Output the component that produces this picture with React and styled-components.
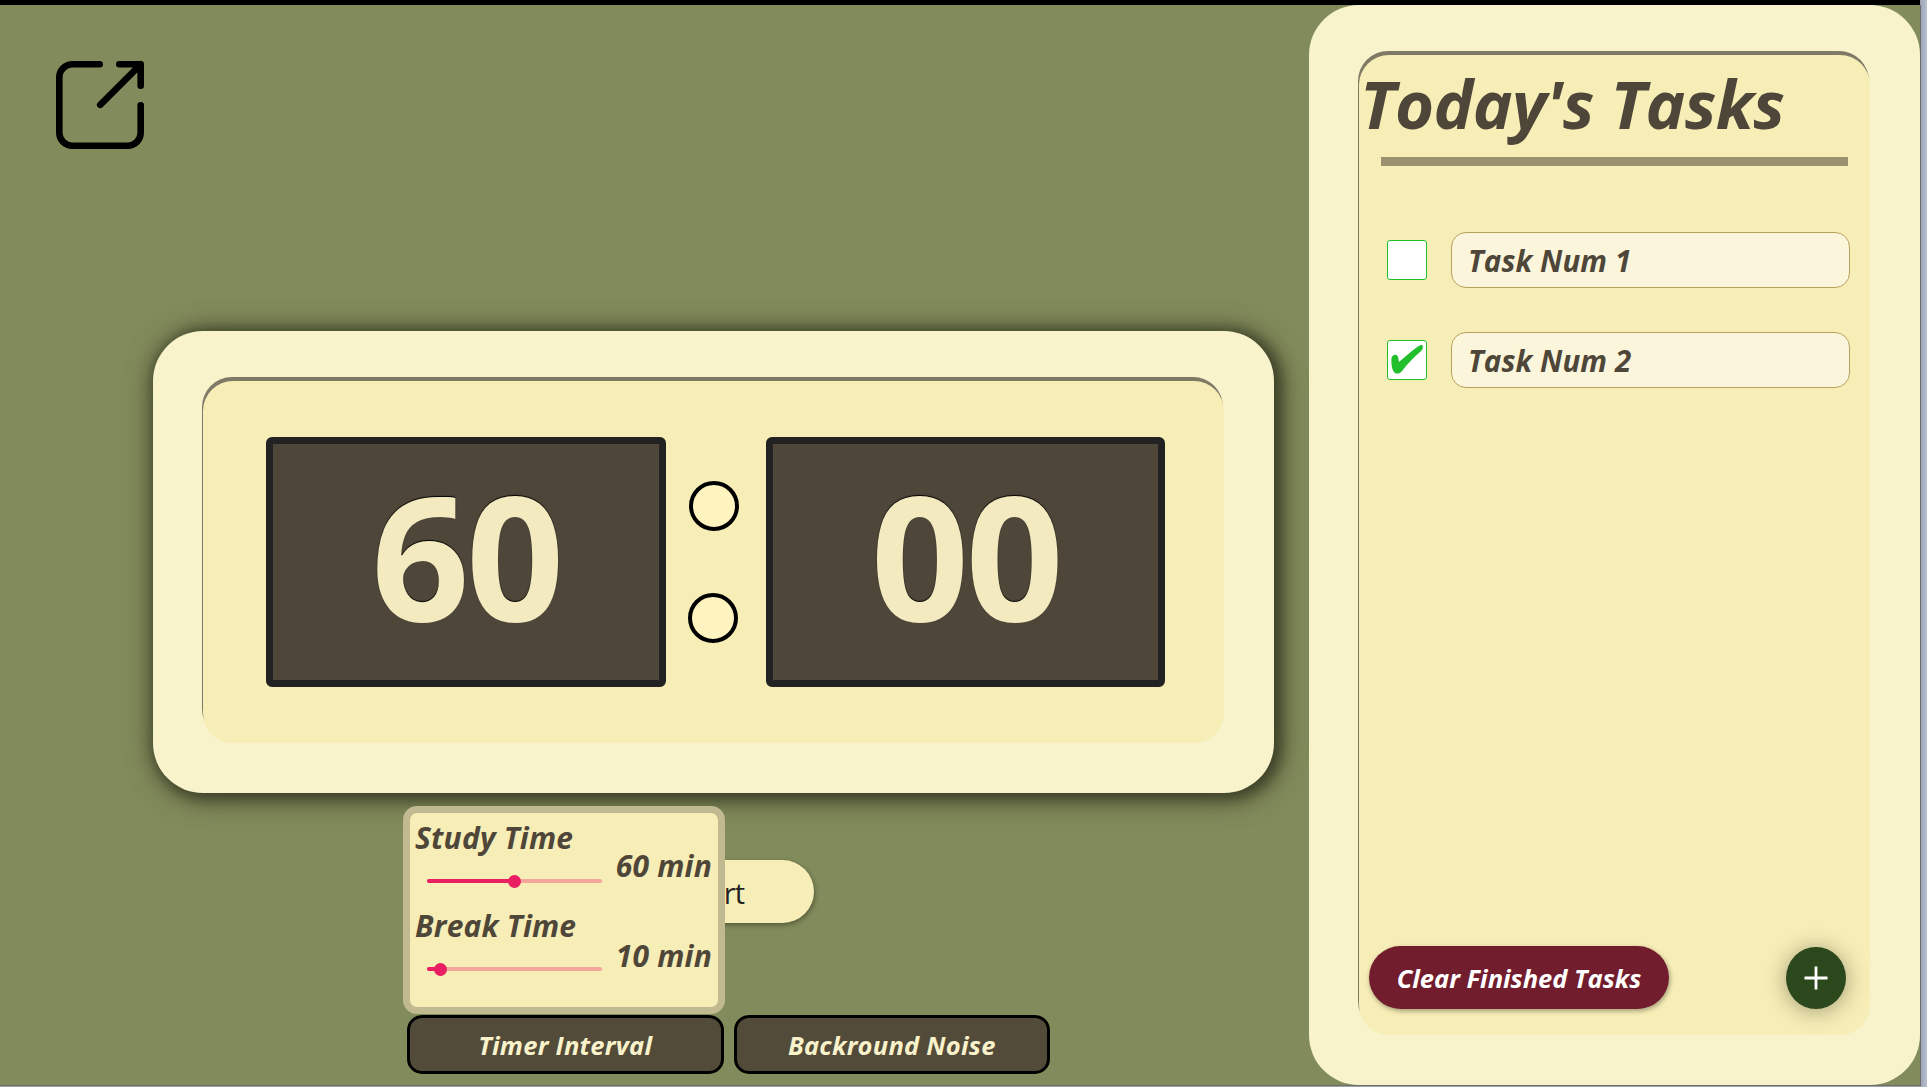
import React from "react";
import styled, { createGlobalStyle } from "styled-components";

const Global = createGlobalStyle`
  * { box-sizing: border-box; }
  html, body { margin: 0; background: #b0b8c9; overflow: hidden; }
  h1, p { margin: 0; }
  button, input { font: inherit; }
`;

const sans = `"Open Sans", "Noto Sans", sans-serif`;

const Frame = styled.div`
  width: 1927px;
  height: 1087px;
  display: flex;
  flex-direction: column;
  font-family: ${sans};
  background: linear-gradient(to right, #9ba1b3 1920px, #b8c0d0 1927px);
`;
const TopBar = styled.div`
  width: 1920px;
  height: 5px;
  background: #000;
`;
const Page = styled.div`
  width: 1921px;
  height: 1081px;
  display: flex;
  background: #828b5b;
  border-right: 1px solid #6c6e6c;
  border-bottom: 1px solid #6c7068;
`;
const Main = styled.main`
  width: 1309px;
  display: flex;
  flex-direction: column;
`;
const Header = styled.header`
  height: 326px;
  padding: 53px 53px 0;
`;
const Clock = styled.section`
  width: 1121px;
  height: 462px;
  margin-left: 153px;
  padding: 50px 50px 50px;
  flex: none;
  border-radius: 50px;
  background: #f9f3cb;
  box-shadow: 3px 3px 30px 0 #3f4329, 4px 2px 14px 3px #3f4329;
`;
const Face = styled.div`
  height: 362px;
  display: flex;
  align-items: flex-start;
  padding: 56px 59px 0 63px;
  border-radius: 30px;
  background: #f7edb6;
  box-shadow: -1px -4px 0 #7f7a66;
`;
const Digits = styled.div`
  width: ${(p) => p.$w}px;
  height: 250px;
  padding-bottom: 15px;
  display: flex;
  align-items: center;
  justify-content: center;
  border: 7px solid #222;
  border-radius: 6px;
  background: #4e4638;
  color: #f3eac0;
  font-size: 172px;
  font-weight: 670;
  line-height: 221px;
  letter-spacing: -3.6px;
  text-shadow: 0 -1px 1px #000;
`;
const Colon = styled.div`
  width: 100px;
  padding: 44px 0 0 23px;
  display: flex;
  flex-direction: column;
  gap: 62px;
`;
const Dot = styled.span`
  width: 50px;
  height: 50px;
  margin-left: ${(p) => p.$shift || 0}px;
  border: 4px solid #000;
  border-radius: 50%;
  background: #fff3bf;
`;
const Controls = styled.div`
  position: relative;
  flex: 1;
  padding: 67px 0 0 614px;
`;
const Start = styled.button`
  display: block;
  width: 200px;
  height: 63px;
  border: 0;
  padding: 1px 0 0;
  border-radius: 32px;
  background: #f7edb6;
  color: #222;
  font-size: 29px;
  letter-spacing: -0.7px;
  box-shadow: 1px 2px 5px rgba(0, 0, 0, 0.35);
`;
const Popover = styled.div`
  position: absolute;
  left: 403px;
  top: 13px;
  width: 322px;
  height: 208px;
  padding: 9px 0 0 5px;
  border: 7px solid #c1b990;
  border-radius: 14px;
  background: #f7edb6;
  color: #4e4638;
  font-weight: 700;
  font-style: italic;
`;
const Setting = styled.div`
  height: 88px;
  display: flex;
  justify-content: space-between;
  padding-right: 6px;
`;
const Label = styled.p`
  font-size: 30px;
  line-height: 32px;
  letter-spacing: 0.2px;
  white-space: nowrap;
`;
const Value = styled(Label)`
  padding-top: ${(p) => p.$top}px;
`;
const Track = styled.div`
  width: 175px;
  height: 4px;
  margin: 25px 0 0 12px;
  border-radius: 2px;
  display: flex;
  align-items: center;
  background: #f4a69b;
`;
const Fill = styled.div`
  height: 4px;
  border-radius: 2px;
  background: #e91e63;
`;
const Thumb = styled.div`
  width: 13px;
  height: 13px;
  margin-left: -6.5px;
  flex: none;
  border-radius: 50%;
  background: #e91e63;
`;
const Menu = styled.nav`
  display: flex;
  gap: 10px;
  margin: 92px 0 0 -207px;
`;
const MenuButton = styled.button`
  width: 316.5px;
  height: 59px;
  padding: 0;
  border: 3px solid #000;
  border-radius: 15px;
  background: #534b39;
  color: #f9f2cb;
  font-size: 25.5px;
  font-weight: 700;
  font-style: italic;
  letter-spacing: 0.25px;
`;
const Panel = styled.aside`
  width: 611px;
  height: 1080px;
  padding: 50px;
  border-radius: 50px;
  background: #f9f3cb;
`;
const Sheet = styled.div`
  height: 980px;
  display: flex;
  flex-direction: column;
  border-radius: 30px;
  background: #f7edb6;
  box-shadow: -1px -4px 0 #7f7a66;
  color: #4e4638;
  font-weight: 700;
  font-style: italic;
`;
const Title = styled.h1`
  height: 102px;
  padding-left: 1px;
  font-size: 67px;
  line-height: 96px;
  letter-spacing: -0.6px;
  white-space: nowrap;
`;
const Rule = styled.div`
  flex: none;
  width: 467px;
  height: 9px;
  margin-left: 22px;
  background: #9a926e;
`;
const Tasks = styled.div`
  flex: 1;
  display: flex;
  flex-direction: column;
  gap: 44px;
  padding: 66px 20px 0 28px;
`;
const Task = styled.div`
  display: flex;
  align-items: center;
  gap: 24px;
`;
const Check = styled.span`
  width: 40px;
  height: 40px;
  flex: none;
  display: flex;
  align-items: center;
  justify-content: center;
  border: 1px solid #1fbf2b;
  border-radius: 3px;
  background: #fff;
`;
const TaskName = styled.div`
  width: 399px;
  height: 56px;
  padding-left: 16px;
  border: 1px solid #b9a15c;
  border-radius: 15px;
  background: #fbf5db;
  font-size: 29.5px;
  line-height: 55px;
  letter-spacing: 0.1px;
`;
const Footer = styled.footer`
  height: 89px;
  display: flex;
  justify-content: space-between;
  padding: 0 24px 0 10px;
`;
const Clear = styled.button`
  width: 300px;
  height: 63px;
  padding: 0;
  border: 0;
  border-radius: 32px;
  background: #711d2e;
  color: #fff;
  font-size: 25.5px;
  white-space: nowrap;
  box-shadow: 1px 2px 5px rgba(0, 0, 0, 0.35);
`;
const Add = styled.button`
  width: 60px;
  height: 62px;
  margin-top: 1px;
  padding: 0;
  border: 0;
  border-radius: 50%;
  display: flex;
  align-items: center;
  justify-content: center;
  background: #2c481d;
  box-shadow: 0 2px 22px rgba(0, 0, 0, 0.35);
`;

function OpenIcon() {
  return (
    <svg width="94" height="94" viewBox="53 58 94 94" fill="none" stroke="#000" strokeWidth="6.6" strokeLinecap="round" strokeLinejoin="round">
      <path d="M99.7 64.3H72.3a13 13 0 0 0-13 13v55.4a13 13 0 0 0 13 13h55.4a13 13 0 0 0 13-13V105.3" />
      <path d="M119.3 64.3h21.4v21.4M140.7 64.3L100.2 104.8" />
    </svg>
  );
}

function CheckMark() {
  return (
    <svg width="38" height="38" viewBox="1388 341 38 38">
      <path d="M1391.4 358.5c.3-3.8 5.200-5.200 6.400-2.200.5 1.200.6 3.200 1.300 5.600 5.500-4.500 14-12.200 20.300-16.300 1.800-1.100 3.500-.6 3.500 1.400 0 1.900-.6 2.900-2.100 4.300-7.500 6.500-13.200 12.500-17.900 18.600-2.100 2.700-3.800 3.800-6 3.700-4.600-.3-5.800-8.500-5.500-15.100z" fill="#22bf2c" />
    </svg>
  );
}

function Slider({ value, max }) {
  return (
    <Track>
      <Fill style={{ width: `${value / max * 100}%` }} />
      <Thumb />
    </Track>
  );
}

const settings = [
  { name: "Study Time", text: "60 min", value: 60, max: 119.5, top: 28 },
  { name: "Break Time", text: "10 min", value: 10, max: 129, top: 30 },
];
const tasks = [
  { name: "Task Num 1", done: false },
  { name: "Task Num 2", done: true },
];

export default function App() {
  return (
    <Frame>
      <Global />
      <TopBar />
      <Page>
        <Main>
          <Header><OpenIcon /></Header>
          <Clock>
            <Face>
              <Digits $w={400}>60</Digits>
              <Colon><Dot /><Dot $shift={-1} /></Colon>
              <Digits $w={399}>00</Digits>
            </Face>
          </Clock>
          <Controls>
            <Start>Start</Start>
            <Menu>
              <MenuButton>Timer Interval</MenuButton>
              <MenuButton>Backround Noise</MenuButton>
            </Menu>
            <Popover>
              {settings.map((s) => (
                <Setting key={s.name}>
                  <div>
                    <Label>{s.name}</Label>
                    <Slider value={s.value} max={s.max} />
                  </div>
                  <Value $top={s.top}>{s.text}</Value>
                </Setting>
              ))}
            </Popover>
          </Controls>
        </Main>
        <Panel>
          <Sheet>
            <Title>Today's Tasks</Title>
            <Rule />
            <Tasks>
              {tasks.map((t) => (
                <Task key={t.name}>
                  <Check>{t.done && <CheckMark />}</Check>
                  <TaskName>{t.name}</TaskName>
                </Task>
              ))}
            </Tasks>
            <Footer>
              <Clear>Clear Finished Tasks</Clear>
              <Add>
                <svg width="24" height="24" viewBox="0 0 24 24" stroke="#fff" strokeWidth="2.8">
                  <path d="M12 .5v23M.5 12h23" />
                </svg>
              </Add>
            </Footer>
          </Sheet>
        </Panel>
      </Page>
    </Frame>
  );
}
